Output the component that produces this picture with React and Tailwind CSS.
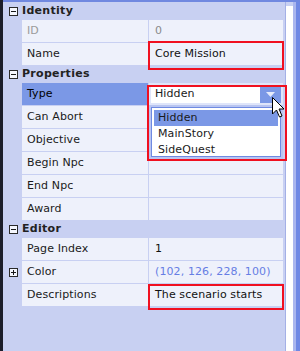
import React from "react";

const groups = [
  {
    title: "Identity",
    rows: [
      { name: "ID", value: "0", muted: true },
      { name: "Name", value: "Core Mission" },
    ],
  },
  {
    title: "Properties",
    rows: [
      { name: "Type", combo: true },
      { name: "Can Abort" },
      { name: "Objective" },
      { name: "Begin Npc" },
      { name: "End Npc" },
      { name: "Award" },
    ],
  },
  {
    title: "Editor",
    rows: [
      { name: "Page Index", value: "1" },
      { name: "Color", value: "(102, 126, 228, 100)", expand: true, blue: true },
      { name: "Descriptions", value: "The scenario starts" },
    ],
  },
];

const Box = ({ plus }) => (
  <div className="relative w-[9px] h-[9px] border border-[#2a2a2a] bg-[#f4f6fd]">
    <div className="absolute left-[1px] top-[3px] w-[5px] h-px bg-[#1a1a1a]" />
    {plus && <div className="absolute left-[3px] top-[1px] w-px h-[5px] bg-[#1a1a1a]" />}
  </div>
);

const Combo = () => (
  <div className="relative flex-1 h-full flex items-center px-[2px]">
    <div className="flex-1 h-[18px] bg-white flex items-center pl-[4px] text-[#1a1a1a]">Hidden</div>
    <div className="w-[21px] h-[18px] bg-[#7b98e6] flex items-center justify-center">
      <svg width="9" height="5" viewBox="0 0 9 5">
        <path d="M0 0 L9 0 L4.5 5 Z" fill="#e6ebfb" />
      </svg>
    </div>
    <div className="absolute left-0 top-[22px] w-[134px] h-[54px] bg-[#b9c5f1] p-[2px] z-10">
      <div className="h-full border border-[#6f8ae2] bg-white p-[2px] flex flex-col">
        <div className="h-[16px] bg-[#7b98e6] flex items-center pl-[4px] text-[#1a1a1a]">Hidden</div>
        <div className="h-[16px] flex items-center pl-[4px] text-[#1a1a1a]">MainStory</div>
        <div className="h-[16px] flex items-center pl-[4px] text-[#1a1a1a]">SideQuest</div>
      </div>
    </div>
  </div>
);

const Row = ({ row }) => (
  <div className="flex h-[22px]">
    <div className="w-[19px] flex items-center pl-[6px]">{row.expand && <Box plus />}</div>
    <div
      className={
        "w-[126px] flex items-center pl-[5px] " +
        (row.combo ? "bg-[#7b98e6] text-[#1a1a1a]" : "bg-[#eef1fb] ") +
        (row.muted ? "text-[#9a9a9a]" : "text-[#1a1a1a]")
      }
    >
      {row.name}
    </div>
    <div className="w-px" />
    {row.combo ? (
      <div className="w-[134px] flex bg-[#dfe5fa]">
        <Combo />
      </div>
    ) : (
      <div
        className={
          "w-[134px] flex items-center pl-[6px] bg-[#eef1fb] " +
          (row.muted ? "text-[#8a8a8a]" : row.blue ? "text-[#667ee4]" : "text-[#111]")
        }
      >
        {row.value}
      </div>
    )}
  </div>
);

export default function App() {
  return (
    <div className="relative w-[300px] h-[351px] flex bg-[#c8d0f2] overflow-hidden font-['DejaVu_Sans',sans-serif] text-[11px] tracking-[0.1px]">
      <div className="w-[3px] bg-[#1b1d2a]" />
      <div className="flex-1 flex flex-col">
        <div className="h-[2px] bg-[#7088e0]" />
        <div className="flex-1 flex">
          <div className="w-[282px] flex flex-col">
            {groups.map((g) => (
              <div key={g.title} className="flex flex-col">
                <div className="h-[18px] flex items-center">
                  <div className="w-[19px] pl-[6px]">
                    <Box />
                  </div>
                  <span className="font-bold text-[#222] tracking-[0.3px]">{g.title}</span>
                </div>
                <div className="flex flex-col gap-px">
                  {g.rows.map((r) => (
                    <Row key={r.name} row={r} />
                  ))}
                </div>
              </div>
            ))}
          </div>
          <div className="w-px bg-[#a4b0e6]" />
          <div className="w-[7px] bg-white mt-[4px]" />
          <div className="w-[3px] bg-[#aab6ee]" />
          <div className="flex-1 bg-[#6f88e4]" />
        </div>
      </div>

      <div className="absolute left-[148px] top-[41px] w-[136px] h-[29px] border-2 border-[#f01020] z-20" />
      <div className="absolute left-[147px] top-[85px] w-[140px] h-[76px] border-2 border-[#f01020] z-20" />
      <div className="absolute left-[148px] top-[284px] w-[136px] h-[26px] border-2 border-[#f01020] z-20" />

      <svg className="absolute left-[272px] top-[97px] z-30" width="13" height="21" viewBox="0 0 13 21">
        <path
          d="M0.5 0.5 L0.5 17 L4.5 13 L7.5 20 L10 19 L7 12 L12 12 Z"
          fill="#fff"
          stroke="#000"
          strokeWidth="1"
          strokeLinejoin="miter"
        />
      </svg>
    </div>
  );
}
